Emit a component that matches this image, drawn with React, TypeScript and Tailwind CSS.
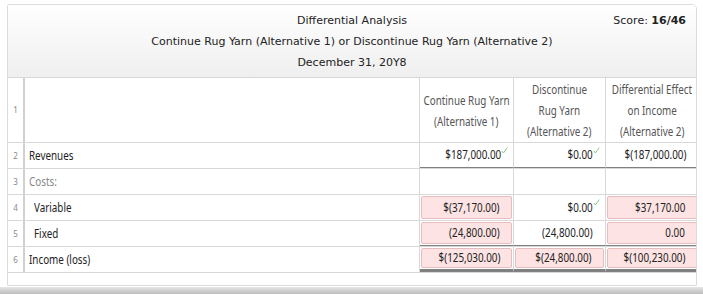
import React from "react";

const Check = () => (
  <svg className="absolute right-[4px] top-[3px]" width="7" height="7" viewBox="0 0 7 7">
    <polyline points="0.8,4 2.4,6 6.3,0.6" fill="none" stroke="#88c888" strokeWidth="1" />
  </svg>
);

type Cell = { v: string; pink?: boolean; check?: boolean };

const rows: { n: string; label: string; indent?: boolean; gray?: boolean; cells: Cell[]; bottom?: "single" | "double" }[] = [
  { n: "2", label: "Revenues", cells: [{ v: "$187,000.00", check: true }, { v: "$0.00", check: true }, { v: "$(187,000.00)" }], bottom: "single" },
  { n: "3", label: "Costs:", gray: true, cells: [{ v: "" }, { v: "" }, { v: "" }] },
  { n: "4", label: "Variable", indent: true, cells: [{ v: "$(37,170.00)", pink: true }, { v: "$0.00", check: true }, { v: "$37,170.00", pink: true }] },
  { n: "5", label: "Fixed", indent: true, cells: [{ v: "(24,800.00)", pink: true }, { v: "(24,800.00)" }, { v: "0.00", pink: true }], bottom: "single" },
  { n: "6", label: "Income (loss)", cells: [{ v: "$(125,030.00)", pink: true }, { v: "$(24,800.00)", pink: true }, { v: "$(100,230.00)", pink: true }], bottom: "double" },
];

const body = { fontFamily: "'Noto Sans', sans-serif" };

const HeadLines = ({ lines }: { lines: string[] }) => (
  <div className="flex flex-col items-center">
    {lines.map((l) => (
      <span key={l} className="inline-block whitespace-nowrap scale-x-[0.82] origin-center leading-[21px]">
        {l}
      </span>
    ))}
  </div>
);

export default function App() {
  return (
    <div className="w-[703px] h-[294px] bg-white relative overflow-hidden">
      <div className="absolute left-[7px] top-[4px] w-[690px] h-[282px] border border-[#dcdcdc] rounded-tr-[5px] rounded-tl-[2px] overflow-hidden">
        <div
          className="h-[73px] bg-gradient-to-b from-white to-[#efefef] border-b border-[#d8d8d8] relative text-[11px] text-[#222] flex flex-col items-center pt-[9px] gap-[7px]"
          style={{ fontFamily: "Tahoma, 'DejaVu Sans', sans-serif" }}
        >
          <div className="leading-[14px]">Differential Analysis</div>
          <div className="leading-[14px]">Continue Rug Yarn (Alternative 1) or Discontinue Rug Yarn (Alternative 2)</div>
          <div className="leading-[14px]">December 31, 20Y8</div>
          <div className="absolute right-[10px] top-[9px] leading-[14px]">
            Score: <b>16/46</b>
          </div>
        </div>
        <div style={body} className="text-[12px]">
          <div className="grid grid-cols-[17px_395px_94px_92px_92px] h-[65px] border-b border-[#d8d8d8]">
            <div className="border-r-2 border-[#d0d0d0] flex items-center justify-center text-[8px] text-[#888]">1</div>
            <div className="border-r border-[#d8d8d8]"></div>
            <div className="border-r border-[#d8d8d8] flex items-center justify-center text-[#555] pt-[1px]">
              <HeadLines lines={["Continue Rug Yarn", "(Alternative 1)"]} />
            </div>
            <div className="border-r border-[#d8d8d8] flex items-center justify-center text-[#555]">
              <HeadLines lines={["Discontinue", "Rug Yarn", "(Alternative 2)"]} />
            </div>
            <div className="flex items-center justify-center text-[#555]">
              <HeadLines lines={["Differential Effect", "on Income", "(Alternative 2)"]} />
            </div>
          </div>
          {rows.map((r) => (
            <div key={r.n} className="grid grid-cols-[17px_395px_94px_92px_92px] h-[26px] border-b border-[#d8d8d8]">
              <div className="border-r-2 border-[#d0d0d0] flex items-center justify-center text-[8px] text-[#888]">{r.n}</div>
              <div className={`border-r border-[#d8d8d8] flex items-center ${r.indent ? "pl-[9px]" : "pl-[4px]"} ${r.gray ? "text-[#888]" : "text-[#222]"}`}>
                <span className="inline-block whitespace-nowrap scale-x-[0.82] origin-left">{r.label}</span>
              </div>
              {r.cells.map((c, i) => (
                <div
                  key={i}
                  className={`${i < 2 ? "border-r border-[#d8d8d8]" : ""} relative p-[1px] ${r.bottom === "single" ? "border-b border-b-[#808080]" : ""} ${r.bottom === "double" ? "border-b-[3px] border-b-[#808080]" : ""}`}
                >
                  <div
                    className={`h-full flex items-center justify-end pr-[11px] text-[#222] relative ${c.pink ? "bg-[#fde3e3] border border-[#e6bdbd] rounded-[2px]" : ""}`}
                  >
                    <span className="inline-block whitespace-nowrap scale-x-[0.82] origin-right">{c.v}</span>
                    {c.check && <Check />}
                  </div>
                </div>
              ))}
            </div>
          ))}
        </div>
      </div>
      <div className="absolute left-0 top-[287px] w-[703px] h-[7px] bg-gradient-to-b from-[#e6e6e6] to-[#bdbdbd]"></div>
    </div>
  );
}
